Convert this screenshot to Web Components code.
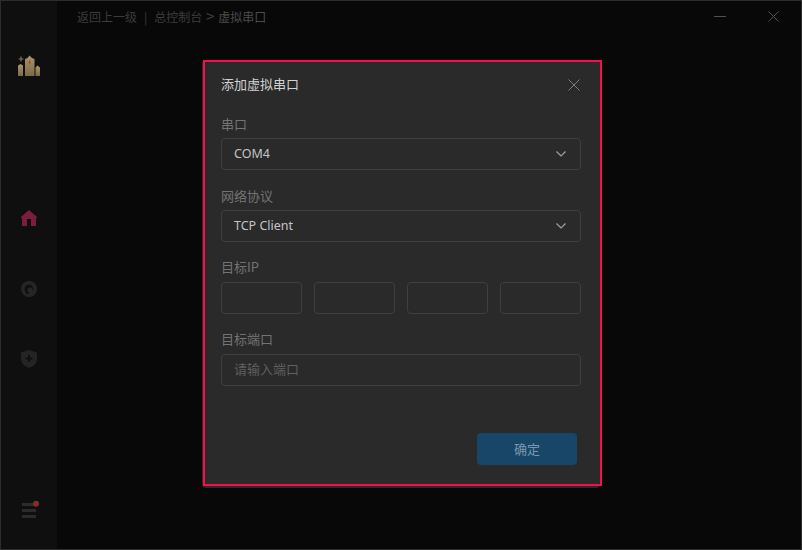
<!DOCTYPE html>
<html lang="zh">
<head>
<meta charset="utf-8">
<title>添加虚拟串口</title>
<style>
html, body {
	margin: 0;
	height: 100%;
	background: #080808;
	font-family: "Noto Sans CJK SC", "Noto Sans", sans-serif;
}
</style>
</head>
<body>
<app-window>
	<side-nav slot="nav"></side-nav>
	<crumb-bar slot="top"></crumb-bar>
</app-window>
<modal-dialog heading="添加虚拟串口">
	<form-field label="串口"><select-box value="COM4"></select-box></form-field>
	<form-field label="网络协议"><select-box value="TCP Client"></select-box></form-field>
	<form-field label="目标IP" tight><ip-input></ip-input></form-field>
	<form-field label="目标端口" tight><text-box placeholder="请输入端口"></text-box></form-field>
	<primary-button slot="footer">确定</primary-button>
</modal-dialog>
<script>
const latin = '"Noto Sans", "Noto Sans CJK SC", sans-serif'

class AppWindow extends HTMLElement {
	connectedCallback() {
		this.attachShadow({ mode: 'open' })
		this.shadowRoot.innerHTML = `
<style>
:host {
	display: flex;
	box-sizing: border-box;
	width: 802px;
	height: 550px;
	border: 1px solid #2c2c2c;
	background: #080808;
}
.main { flex: 1; }
</style>
<slot name="nav"></slot>
<div class="main"><slot name="top"></slot></div>
`
	}
}

class SideNav extends HTMLElement {
	connectedCallback() {
		this.attachShadow({ mode: 'open' })
		this.shadowRoot.innerHTML = `
<style>
:host {
	display: flex;
	flex-direction: column;
	align-items: center;
	box-sizing: border-box;
	width: 56px;
	height: 100%;
	padding: 53px 0 30px;
	background: #0f0f0f;
}
svg { display: block; flex: none; }
.logo { filter: blur(0.4px); opacity: 0.85; }
.home { margin-top: 134px; }
.ring { margin-top: 55px; }
.shield { margin-top: 53px; }
.menu { margin-top: auto; }
</style>
<svg class="logo" width="22" height="22" viewBox="0 0 22 22">
	<defs>
		<linearGradient id="gold" x1="0" y1="0" x2="0" y2="1">
			<stop offset="0" stop-color="#c4ae80"/>
			<stop offset="1" stop-color="#8f7a50"/>
		</linearGradient>
	</defs>
	<path d="M3 2.500v5M0.500 5h5" stroke="#8f8468" stroke-width="1.200"/>
	<path d="M0 22V11.500L2.500 10 5 11.500V22z" fill="url(#gold)"/>
	<path d="M7 22V5L9.500 4 11.500 1.500 14 4 16.500 5V22z" fill="url(#gold)"/>
	<path d="M17.500 22V13.500L19.500 11.500 22 13.500V22z" fill="url(#gold)"/>
	<path d="M11.700 5.500l1.300 3-1.300 2.500-1.300-2.500z" fill="#c9622a"/>
</svg>
<svg class="home" width="16" height="16" viewBox="0 0 16 16">
	<path fill="#7b1d3c" d="M8 0L16 7V8H15V16H10V9H6V16H1V8H0V7z"/>
</svg>
<svg class="ring" width="16" height="16" viewBox="0 0 16 16">
	<circle cx="8" cy="8" r="8" fill="#262626"/>
	<path fill="#0f0f0f" d="M8 3.500A4.500 4.500 0 0 1 12.400 8.500L5.800 13.500 4.900 11.200A4.500 4.500 0 0 1 8 3.500Z"/>
	<circle cx="9" cy="9" r="2.600" fill="#262626"/>
</svg>
<svg class="shield" width="16" height="18" viewBox="0 0 16 18">
	<path fill="#242424" d="M8 0L16 2.500V9C16 13.500 12 16.500 8 18 4 16.500 0 13.500 0 9V2.500z"/>
	<path stroke="#0f0f0f" stroke-width="2" d="M8 5V12M4.500 8.500H11.500"/>
</svg>
<svg class="menu" width="20" height="20" viewBox="0 0 20 20">
	<path fill="#2b2b2b" d="M3 4H16V7H3zM3 10H17V13H3zM3 16H17V19H3z"/>
	<circle cx="17" cy="4.700" r="3" fill="#842b2b"/>
</svg>
`
	}
}

class CrumbBar extends HTMLElement {
	connectedCallback() {
		this.attachShadow({ mode: 'open' })
		this.shadowRoot.innerHTML = `
<style>
:host {
	display: flex;
	align-items: center;
	height: 30px;
	padding: 0 22px 0 20px;
	font-size: 12px;
	color: #3c3c3c;
}
.sep { margin: 0 7px; }
.arrow { width: 16px; text-align: center; font-size: 15px; line-height: 16px; }
.now { color: #4c4c4c; }
.ctrl { margin-left: auto; display: flex; align-items: flex-start; gap: 42px; }
.x { margin-top: 1px; }
svg { display: block; }
</style>
<span>返回上一级</span><span class="sep">|</span><span>总控制台</span><span class="arrow">&gt;</span><span class="now">虚拟串口</span>
<div class="ctrl">
	<svg width="12" height="12" viewBox="0 0 12 12"><path d="M0 6.500H12" stroke="#505050"/></svg>
	<svg class="x" width="11" height="11" viewBox="0 0 11 11"><path d="M0.500 0.500L10.500 10.500M10.500 0.500L0.500 10.500" stroke="#505050"/></svg>
</div>
`
	}
}

class ModalDialog extends HTMLElement {
	connectedCallback() {
		this.attachShadow({ mode: 'open' })
		this.shadowRoot.innerHTML = `
<style>
:host {
	position: absolute;
	left: 202px;
	top: 60px;
	display: flex;
	flex-direction: column;
	box-sizing: border-box;
	width: 398px;
	height: 428px;
	padding: 0 19px;
	background: #2a2a2a;
	border-radius: 4px;
}
.mark {
	position: absolute;
	left: 1px;
	top: 0;
	width: 399px;
	height: 426px;
	box-sizing: border-box;
	border: 2px solid #f50f4b;
}
header {
	display: flex;
	align-items: center;
	justify-content: space-between;
	box-sizing: border-box;
	height: 54px;
	padding-bottom: 8px;
	margin-right: 1px;
	color: #d2d2d2;
	font-size: 13px;
}
header svg { margin-top: 4px; }
svg { display: block; }
footer {
	margin-top: auto;
	padding: 0 4px 23px 0;
	display: flex;
	justify-content: flex-end;
}
</style>
<header>
	<span>${this.getAttribute('heading')}</span>
	<svg width="12" height="12" viewBox="0 0 12 12"><path d="M0.500 0.500L11.500 11.500M11.500 0.500L0.500 11.500" stroke="#7c7c7c"/></svg>
</header>
<slot></slot>
<footer><slot name="footer"></slot></footer>
<div class="mark"></div>
`
	}
}

class FormField extends HTMLElement {
	connectedCallback() {
		this.attachShadow({ mode: 'open' })
		this.shadowRoot.innerHTML = `
<style>
:host {
	display: block;
	margin-bottom: 16px;
}
label {
	display: block;
	height: 24px;
	line-height: 20px;
	font-size: 13px;
	color: #737373;
}
:host([tight]) label { line-height: 18px; }
</style>
<label>${this.getAttribute('label')}</label>
<slot></slot>
`
	}
}

class SelectBox extends HTMLElement {
	connectedCallback() {
		this.attachShadow({ mode: 'open' })
		this.shadowRoot.innerHTML = `
<style>
:host {
	display: flex;
	align-items: center;
	justify-content: space-between;
	box-sizing: border-box;
	height: 32px;
	padding: 0 13px 0 12px;
	border: 1px solid #3f3f3f;
	border-radius: 4px;
	font-family: ${latin};
	font-size: 12.500px;
	color: #c4c4c4;
}
span { padding-bottom: 2px; }
svg { display: block; }
</style>
<span>${this.getAttribute('value')}</span>
<svg width="12" height="8" viewBox="0 0 12 8"><path d="M1.500 1.500L6 6 10.500 1.500" fill="none" stroke="#a0a0a0" stroke-width="1.200"/></svg>
`
	}
}

class TextBox extends HTMLElement {
	connectedCallback() {
		this.attachShadow({ mode: 'open' })
		const ph = this.getAttribute('placeholder') || ''
		this.shadowRoot.innerHTML = `
<style>
:host {
	display: flex;
	align-items: center;
	box-sizing: border-box;
	height: 32px;
	padding: 0 12px;
	border: 1px solid #3f3f3f;
	border-radius: 4px;
	font-size: 13px;
	color: #5f5f5f;
}
span { padding-bottom: 3px; }
</style>
<span>${ph}</span>
`
	}
}

class IpInput extends HTMLElement {
	connectedCallback() {
		this.attachShadow({ mode: 'open' })
		this.shadowRoot.innerHTML = `
<style>
:host {
	display: grid;
	grid-template-columns: repeat(4, 1fr);
	gap: 12px;
}
</style>
<text-box></text-box><text-box></text-box><text-box></text-box><text-box></text-box>
`
	}
}

class PrimaryButton extends HTMLElement {
	connectedCallback() {
		this.attachShadow({ mode: 'open' })
		this.shadowRoot.innerHTML = `
<style>
:host {
	display: flex;
	align-items: center;
	justify-content: center;
	box-sizing: border-box;
	width: 100px;
	height: 32px;
	padding-bottom: 2px;
	border-radius: 4px;
	background: #174668;
	font-size: 13px;
	color: #7b98ae;
}
</style>
<slot></slot>
`
	}
}

customElements.define('app-window', AppWindow)
customElements.define('side-nav', SideNav)
customElements.define('crumb-bar', CrumbBar)
customElements.define('modal-dialog', ModalDialog)
customElements.define('form-field', FormField)
customElements.define('select-box', SelectBox)
customElements.define('text-box', TextBox)
customElements.define('ip-input', IpInput)
customElements.define('primary-button', PrimaryButton)
</script>
</body>
</html>
